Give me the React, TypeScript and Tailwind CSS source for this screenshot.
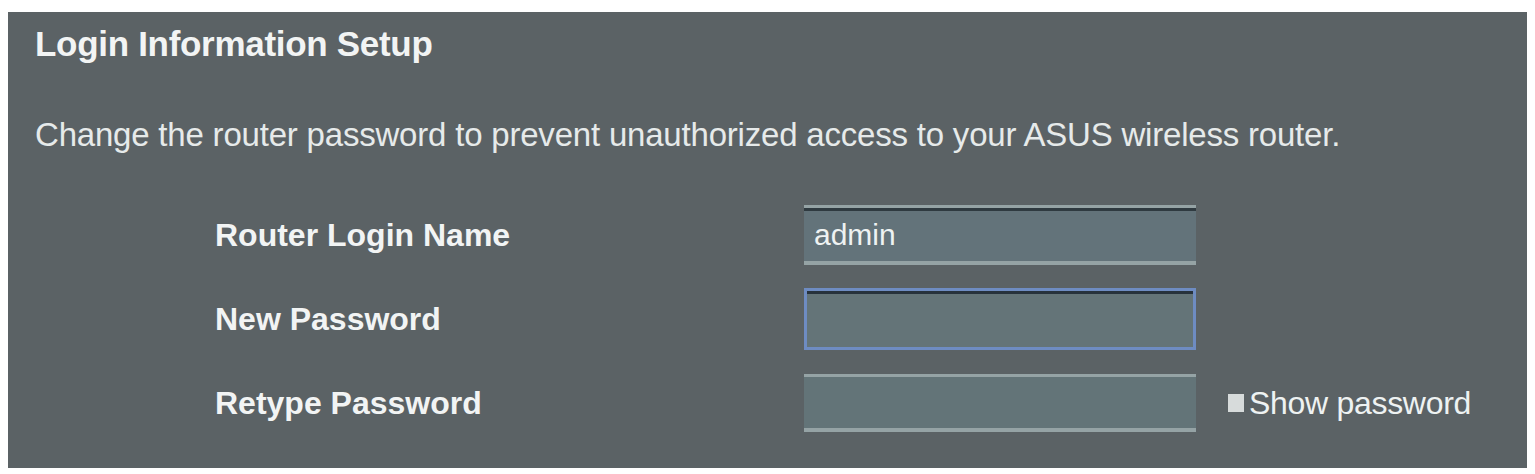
export default function App() {
  return (
    <div className="h-[474px] w-[1535px] bg-white pl-2 pr-2 pt-3 pb-[6px]" style={{ fontFamily: '"Liberation Sans", Arial, sans-serif' }}>
      <div className="h-full bg-[#5b6265] pl-[27px] pt-[12px]">
        <h1 className="text-[35px] font-bold leading-10 tracking-[-0.3px] text-[#f2f4f4]">Login Information Setup</h1>
        <p className="mt-[51px] text-[33px] leading-10 tracking-[-0.2px] text-[#e6eaea]">
          Change the router password to prevent unauthorized access to your ASUS wireless router.
        </p>
        <div className="mt-[50px] grid grid-cols-[589px_392px_auto] items-center pl-[180px]">
          <label className="text-[32px] font-bold text-[#f2f4f4]">Router Login Name</label>
          <div className="flex h-[60px] items-center border-t-[3px] border-b-[4px] border-t-[#95a3a5] border-b-[#95a3a5] bg-[#63737a] px-[10px] shadow-[inset_0_3px_0_#2f3a40]">
            <span className="text-[30px] text-[#eef2f2]">admin</span>
          </div>
          <div />

          <label className="mt-[23px] text-[32px] font-bold text-[#f2f4f4]">New Password</label>
          <div className="mt-[23px] h-[62px] border-[3px] border-[#6e8cc2] bg-[#647478] shadow-[inset_0_3px_0_#27323c]" />
          <div />

          <label className="mt-[24px] text-[32px] font-bold text-[#f2f4f4]">Retype Password</label>
          <div className="mt-[24px] h-[58px] border-t-[3px] border-b-[4px] border-[#95a3a5] bg-[#637478]" />
          <label className="ml-[32px] mt-[24px] flex items-center gap-[5px] text-[32px] tracking-[-0.3px] text-[#eef2f2]">
            <span className="h-[18px] w-[16px] bg-[#d7dbdb]" />
            Show password
          </label>
        </div>
      </div>
    </div>
  )
}
